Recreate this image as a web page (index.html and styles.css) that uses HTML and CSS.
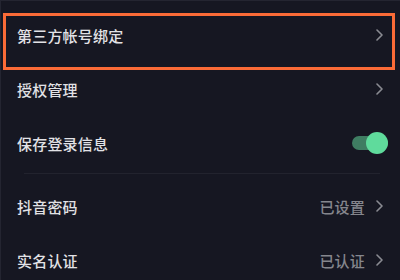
FILE: index.html
```html
<!DOCTYPE html>
<html lang="zh-CN">
<head>
<meta charset="utf-8">
<title>账号与安全</title>
<link rel="stylesheet" href="styles.css">
</head>
<body>
<div class="screen">
  <div class="row row-marked">
    <span class="label">第三方帐号绑定</span>
    <svg class="chevron" viewBox="0 0 7 12" width="7" height="12"><polyline points="1,1 6,6 1,11"/></svg>
    <div class="mark"></div>
  </div>
  <div class="row">
    <span class="label">授权管理</span>
    <svg class="chevron" viewBox="0 0 7 12" width="7" height="12"><polyline points="1,1 6,6 1,11"/></svg>
  </div>
  <div class="row">
    <span class="label">保存登录信息</span>
    <div class="toggle"><div class="knob"></div></div>
  </div>
  <div class="divider"></div>
  <div class="row">
    <span class="label">抖音密码</span>
    <span class="value">已设置</span>
    <svg class="chevron" viewBox="0 0 7 12" width="7" height="12"><polyline points="1,1 6,6 1,11"/></svg>
  </div>
  <div class="row">
    <span class="label">实名认证</span>
    <span class="value">已认证</span>
    <svg class="chevron" viewBox="0 0 7 12" width="7" height="12"><polyline points="1,1 6,6 1,11"/></svg>
  </div>
</div>
</body>
</html>
```

FILE: styles.css
```css
html, body {
  margin: 0;
  padding: 0;
  background: #161722;
}

.screen {
  width: 400px;
  height: 280px;
  box-sizing: border-box;
  padding-top: 7px;
  overflow: hidden;
  background: #161722;
  border-top: 1px solid #242531;
  border-left: 1px solid #242531;
  font-family: "Noto Sans CJK SC", "Noto Sans", sans-serif;
}

.row {
  position: relative;
  display: flex;
  align-items: center;
  height: 54px;
  padding: 0 17px 0 16px;
}

.label {
  flex: 1;
  font-size: 15px;
  font-weight: 500;
  color: #e2e2e6;
  letter-spacing: 0.2px;
}

.value {
  font-size: 15px;
  font-weight: 500;
  color: #85868d;
  margin-right: 11px;
  letter-spacing: 0.2px;
}

.chevron {
  display: block;
}

.chevron polyline {
  fill: none;
  stroke: #8a8b92;
  stroke-width: 1.6;
  stroke-linecap: round;
  stroke-linejoin: round;
}

.mark {
  position: absolute;
  top: 5px;
  left: 2px;
  right: 5px;
  height: 57px;
  box-sizing: border-box;
  border: 3.5px solid #fa6b37;
}

.toggle {
  position: relative;
  width: 36px;
  height: 14px;
  border-radius: 7px;
  background: #3f7d62;
  margin-right: -5px;
}

.knob {
  position: absolute;
  right: 0;
  top: -4px;
  width: 22px;
  height: 22px;
  border-radius: 50%;
  background: #5fdb9c;
}

.divider {
  height: 1px;
  margin: 3px 20px 5px 23px;
  background: #22232e;
}
```
